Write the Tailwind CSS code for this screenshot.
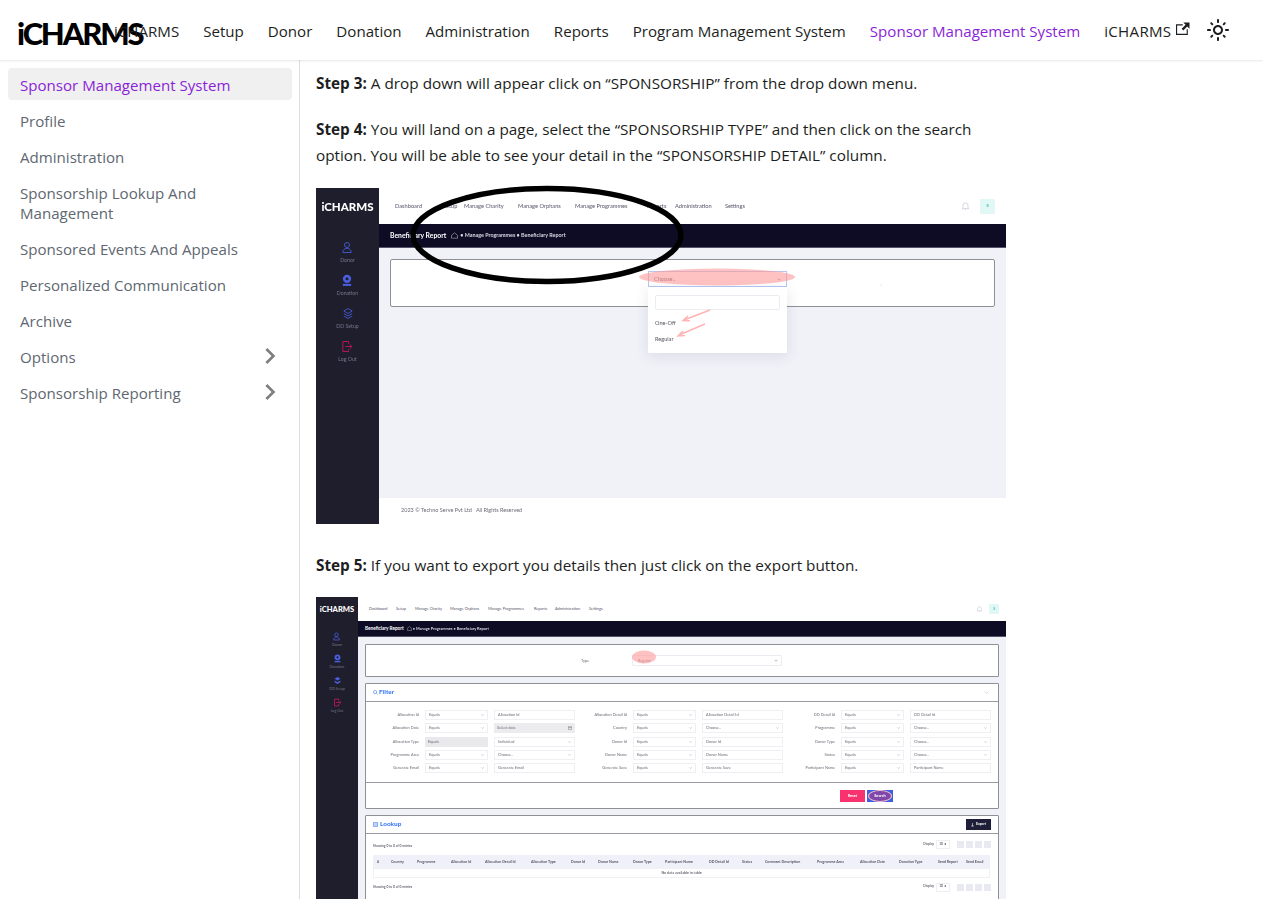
<!DOCTYPE html>
<html lang="en">
<head>
<meta charset="utf-8">
<title>iCHARMS</title>
<script src="https://cdn.jsdelivr.net/npm/@tailwindcss/browser@4"></script>
</head>
<body class="bg-white text-[#1c1e21] font-['Open_Sans',sans-serif]">
<div class="h-[899px] overflow-hidden flex flex-col">

<nav class="relative z-10 h-[60px] shrink-0 bg-white shadow-[0_1px_2px_0_rgba(0,0,0,0.1)] flex items-center pl-[17px] text-[15.1px]">
  <div class="w-[97px] whitespace-nowrap font-['Lato',sans-serif] font-black text-[31px] leading-none text-black tracking-[-2.2px] pt-[7px]">iCHARMS</div>
  <div class="flex items-center gap-[24px] whitespace-nowrap pt-[2px]">
    <a>iCHARMS</a>
    <a>Setup</a>
    <a>Donor</a>
    <a>Donation</a>
    <a>Administration</a>
    <a>Reports</a>
    <a>Program Management System</a>
    <a class="text-[#8a1fd8]">Sponsor Management System</a>
    <a class="flex items-center gap-[5px] tracking-[0.3px]">iCHARMS
      <svg width="13.5" height="13.5" viewBox="0 0 24 24" fill="currentColor" class="mb-[4px]"><path d="M21 13v10h-21v-19h12v2h-10v15h17v-8h2zm3-12h-10.988l4.035 4-6.977 7.07 2.828 2.828 6.977-7.07 4.125 4.172v-11z"/></svg>
    </a>
  </div>
  <svg width="24" height="24" viewBox="0 0 24 24" fill="currentColor" class="ml-[16px]"><path d="M12,9c1.65,0,3,1.35,3,3s-1.35,3-3,3s-3-1.35-3-3S10.35,9,12,9 M12,7c-2.76,0-5,2.24-5,5s2.24,5,5,5s5-2.24,5-5 S14.76,7,12,7L12,7z M2,13l2,0c0.55,0,1-0.45,1-1s-0.45-1-1-1l-2,0c-0.55,0-1,0.45-1,1S1.45,13,2,13z M20,13l2,0c0.55,0,1-0.45,1-1 s-0.45-1-1-1l-2,0c-0.55,0-1,0.45-1,1S19.45,13,20,13z M11,2v2c0,0.55,0.45,1,1,1s1-0.45,1-1V2c0-0.55-0.45-1-1-1S11,1.45,11,2z M11,20v2c0,0.55,0.45,1,1,1s1-0.45,1-1v-2c0-0.55-0.45-1-1-1C11.45,19,11,19.45,11,20z M5.99,4.58c-0.39-0.39-1.03-0.39-1.41,0 c-0.39,0.39-0.39,1.03,0,1.41l1.06,1.06c0.39,0.39,1.03,0.39,1.41,0s0.39-1.03,0-1.41L5.99,4.58z M18.36,16.95 c-0.39-0.39-1.03-0.39-1.41,0c-0.39,0.39-0.39,1.03,0,1.41l1.06,1.06c0.39,0.39,1.03,0.39,1.41,0c0.39-0.39,0.39-1.03,0-1.41 L18.36,16.95z M19.42,5.99c0.39-0.39,0.39-1.03,0-1.41c-0.39-0.39-1.03-0.39-1.41,0l-1.06,1.06c-0.39,0.39-0.39,1.03,0,1.41 s1.03,0.39,1.41,0L19.42,5.99z M7.05,18.36c0.39-0.39,0.39-1.03,0-1.41c-0.39-0.39-1.03-0.39-1.41,0l-1.06,1.06 c-0.39,0.39-0.39,1.03,0,1.41s1.03,0.39,1.41,0L7.05,18.36z"/></svg>
</nav>

<div class="flex flex-1 min-h-0">
  <aside class="w-[300px] shrink-0 border-r border-[#dadde1] pl-[8px] pr-[7px] pt-[8px] text-[15.1px] leading-[20px] text-[#606770] flex flex-col gap-[4px]">
    <a class="block px-[12px] pt-[7px] pb-[5px] rounded-[4px] bg-[#f0f0f0] text-[#8a1fd8]">Sponsor Management System</a>
    <a class="block px-[12px] pt-[7px] pb-[5px]">Profile</a>
    <a class="block px-[12px] pt-[7px] pb-[5px]">Administration</a>
    <a class="block px-[12px] pt-[7px] pb-[5px]">Sponsorship Lookup And Management</a>
    <a class="block px-[12px] pt-[7px] pb-[5px]">Sponsored Events And Appeals</a>
    <a class="block px-[12px] pt-[7px] pb-[5px]">Personalized Communication</a>
    <a class="block px-[12px] pt-[7px] pb-[5px]">Archive</a>
    <a class="flex items-center justify-between pl-[12px] pr-[6px] h-[32px] pt-[2px]">Options
      <svg width="32" height="32" viewBox="0 0 24 24" fill="#7f7f7f" class="rotate-90 -mt-[3px]"><path d="M7.41 15.41L12 10.83l4.59 4.58L18 14l-6-6-6 6z"/></svg>
    </a>
    <a class="flex items-center justify-between pl-[12px] pr-[6px] h-[32px] pt-[2px]">Sponsorship Reporting
      <svg width="32" height="32" viewBox="0 0 24 24" fill="#7f7f7f" class="rotate-90 -mt-[3px]"><path d="M7.41 15.41L12 10.83l4.59 4.58L18 14l-6-6-6 6z"/></svg>
    </a>
  </aside>

  <main class="flex-1 min-w-0 pl-[16px] pt-[10px] text-[15.3px] leading-[26px] overflow-hidden">
    <p class="mb-[20px]"><strong class="font-bold">Step 3:</strong> A drop down will appear click on “SPONSORSHIP” from the drop down menu.</p>
    <p class="mb-[20px] w-[690px]"><strong class="font-bold">Step 4:</strong> You will land on a page, select the “SPONSORSHIP TYPE” and then click on the search option. You will be able to see your detail in the “SPONSORSHIP DETAIL” column.</p>

    <!-- Screenshot 1 -->
    <div class="relative w-[690px] h-[336px] mb-[28px] flex bg-white font-['Lato',sans-serif] leading-none blur-[0.35px]">
      <div class="w-[63px] shrink-0 bg-[#1e1e2d] flex flex-col items-center pt-[12px] text-[#77778a] text-[5.2px]">
        <div class="h-[41px] font-black text-[11.5px] text-white leading-[14px]">iCHARMS</div>
        <div class="h-[33px] flex flex-col items-center gap-[4px]">
          <svg width="10" height="13" viewBox="0 0 12 14" fill="none" stroke="#4a5fe0" stroke-width="1"><circle cx="6" cy="4" r="3"/><path d="M1 13c0-3 2-5 5-5s5 2 5 5z"/></svg>
          <span>Donor</span>
        </div>
        <div class="h-[33px] flex flex-col items-center gap-[4px]">
          <svg width="10" height="13" viewBox="0 0 12 14" fill="#4a5fe0"><circle cx="6" cy="5" r="5"/><path d="M1 11h10v2.5H1z"/><circle cx="6" cy="5" r="1.8" fill="#1e1e2d"/></svg>
          <span>Donation</span>
        </div>
        <div class="h-[33px] flex flex-col items-center gap-[4px]">
          <svg width="10" height="13" viewBox="0 0 12 14" fill="none" stroke="#4a5fe0" stroke-width="1"><path d="M6 1l5 3-5 3-5-3z"/><path d="M1 7l5 3 5-3"/><path d="M1 10l5 3 5-3"/></svg>
          <span>DD Setup</span>
        </div>
        <div class="h-[33px] flex flex-col items-center gap-[4px]">
          <svg width="10" height="13" viewBox="0 0 12 14" fill="none" stroke="#c2185b" stroke-width="1.1"><path d="M8 4V1H1v12h7v-3"/><path d="M4 7h7.5M9.5 4.5L12 7l-2.5 2.5"/></svg>
          <span>Log Out</span>
        </div>
      </div>
      <div class="flex-1 flex flex-col min-w-0">
        <div class="h-[36px] flex items-center pl-[16px] pr-[11px] text-[5.7px] text-[#55556a] whitespace-nowrap">
          <span class="w-[48px]">Dashboard</span>
          <span class="w-[21px]">Setup</span>
          <span class="w-[54px]">Manage Charity</span>
          <span class="w-[57px]">Manage Orphans</span>
          <span class="w-[72px]">Manage Programmes</span>
          <span class="w-[28px]">Reports</span>
          <span class="w-[50px]">Administration</span>
          <span>Settings</span>
          <svg width="7" height="8" viewBox="0 0 7 8" fill="none" stroke="#b9b9cc" stroke-width="0.6" class="ml-auto mr-[11px]"><path d="M1 6V3.5a2.5 2.5 0 015 0V6l.6.7H.4zM3 7.4h1"/></svg>
          <span class="w-[15px] h-[15px] bg-[#e2f8f6] rounded-[1px] flex items-center justify-center text-[#2ab7a9] text-[4px] font-bold">S</span>
        </div>
        <div class="h-[24px] bg-[#0e0c24] flex items-center pl-[11px] text-white whitespace-nowrap border-b border-[#55556a]">
          <span class="font-bold text-[6.8px]">Beneficiary Report</span>
          <svg width="7" height="7" viewBox="0 0 7 7" fill="none" stroke="#d0d0dc" stroke-width="0.5" class="ml-[5px] mr-[2px]"><path d="M.5 3.3L3.5.8l3 2.5V6.2h-6z"/></svg>
          <span class="font-bold text-[5.4px] text-[#d8d8e2]">• Manage Programmes • Beneficiary Report</span>
        </div>
        <div class="flex-1 bg-[#f1f2f8] pt-[11px] px-[11px]">
          <div class="h-[48px] bg-white border border-[#8f8f96] rounded-[2px] pl-[257px] pt-[11px]">
            <div class="relative w-[139px] h-[16px] bg-white border border-[#b4c6f4] flex items-center justify-between px-[5px] text-[5.6px] text-[#55555f]">
              <span>Choose..</span>
              <svg width="4" height="3" viewBox="0 0 4 3" fill="none" stroke="#55556a" stroke-width="0.6"><path d="M.5.7L2 2.2 3.5.7"/></svg>
              <div class="absolute left-[-1px] top-[15px] w-[139px] h-[66px] bg-white shadow-[0_3px_14px_rgba(60,60,90,0.13)] rounded-b-[1px] px-[7px] pt-[8px] flex flex-col">
                <div class="h-[15px] border border-[#ececf2] rounded-[2px]"></div>
                <span class="mt-[10px]">One-Off</span>
                <span class="mt-[10px]">Regular</span>
              </div>
            </div>
          </div>
        </div>
        <div class="h-[26px] bg-white flex items-center pl-[22px] text-[5.5px] text-[#6b6b78]">2023 © Techno Serve Pvt Ltd &nbsp; All Rights Reserved</div>
      </div>
      <svg class="absolute inset-0 overflow-visible pointer-events-none" width="690" height="336" viewBox="0 0 690 336" fill="none">
        <ellipse cx="231" cy="47" rx="134" ry="46.5" stroke="#000" stroke-width="5.5"/>
        <ellipse cx="401" cy="89" rx="78" ry="8.5" fill="#ff9a9a" fill-opacity="0.6"/>
        <path d="M394 122l-26 10M372 128l-5 4.5 7 .2M389 136l-26 11M367 143l-5 5 7-.4" stroke="#ffb3b3" stroke-width="1.4"/>
        <circle cx="565" cy="97" r="0.6" fill="#ffb3b3"/>
      </svg>
    </div>

    <p class="mb-[19px]"><strong class="font-bold">Step 5:</strong> If you want to export you details then just click on the export button.</p>

    <!-- Screenshot 2 -->
    <div class="relative w-[690px] h-[330px] flex bg-white font-['Lato',sans-serif] leading-none blur-[0.4px]">
      <div class="w-[42px] shrink-0 bg-[#1e1e2d] flex flex-col items-center pt-[8px] text-[#77778a] text-[3.6px]">
        <div class="h-[27px] font-black text-[7.6px] text-white leading-[9px]">iCHARMS</div>
        <div class="h-[22px] flex flex-col items-center gap-[2px]">
          <svg width="7" height="9" viewBox="0 0 12 14" fill="none" stroke="#4a5fe0" stroke-width="1.3"><circle cx="6" cy="4" r="3"/><path d="M1 13c0-3 2-5 5-5s5 2 5 5z"/></svg>
          <span>Donor</span>
        </div>
        <div class="h-[22px] flex flex-col items-center gap-[2px]">
          <svg width="7" height="9" viewBox="0 0 12 14" fill="#4a5fe0"><circle cx="6" cy="5" r="5"/><path d="M1 11h10v2.5H1z"/><circle cx="6" cy="5" r="1.8" fill="#1e1e2d"/></svg>
          <span>Donation</span>
        </div>
        <div class="h-[22px] flex flex-col items-center gap-[2px]">
          <svg width="7" height="9" viewBox="0 0 12 14" fill="#4a5fe0"><path d="M6 1l5 3-5 3-5-3z"/><path d="M1 7l5 3 5-3v3l-5 3-5-3z"/></svg>
          <span>DD Setup</span>
        </div>
        <div class="h-[22px] flex flex-col items-center gap-[2px]">
          <svg width="7" height="9" viewBox="0 0 12 14" fill="none" stroke="#c2185b" stroke-width="1.5"><path d="M8 4V1H1v12h7v-3"/><path d="M4 7h7.5M9.5 4.5L12 7l-2.5 2.5"/></svg>
          <span>Log Out</span>
        </div>
      </div>
      <div class="flex-1 flex flex-col min-w-0">
        <div class="h-[24px] shrink-0 flex items-center pl-[11px] pr-[7px] text-[3.9px] text-[#55556a] whitespace-nowrap">
          <span class="w-[27px]">Dashboard</span>
          <span class="w-[19px]">Setup</span>
          <span class="w-[35px]">Manage Charity</span>
          <span class="w-[38px]">Manage Orphans</span>
          <span class="w-[46px]">Manage Programmes</span>
          <span class="w-[21px]">Reports</span>
          <span class="w-[34px]">Administration</span>
          <span>Settings</span>
          <svg width="5" height="6" viewBox="0 0 7 8" fill="none" stroke="#b9b9cc" stroke-width="0.7" class="ml-auto mr-[7px]"><path d="M1 6V3.5a2.5 2.5 0 015 0V6l.6.7H.4zM3 7.4h1"/></svg>
          <span class="w-[10px] h-[10px] bg-[#dff8f5] flex items-center justify-center text-[#2ab7a9] text-[3px] font-bold">S</span>
        </div>
        <div class="h-[16px] shrink-0 bg-[#0e0c24] flex items-center pl-[7px] text-white whitespace-nowrap border-b border-[#55556a]">
          <span class="font-bold text-[4.7px]">Beneficiary Report</span>
          <svg width="5" height="5" viewBox="0 0 7 7" fill="none" stroke="#d0d0dc" stroke-width="0.6" class="ml-[3px] mr-[1px]"><path d="M.5 3.3L3.5.8l3 2.5V6.2h-6z"/></svg>
          <span class="font-bold text-[3.9px] text-[#d8d8e2]">• Manage Programmes • Beneficiary Report</span>
        </div>
        <div class="flex-1 bg-[#f1f2f8] px-[7px] pt-[7px] text-[3.9px] text-[#6b6b78]">

          <div class="h-[33px] bg-white border border-[#8f8f96] rounded-[1px] flex items-center">
            <span class="ml-[215px] w-[51px]">Type</span>
            <div class="w-[150px] h-[11px] border border-[#ececf2] rounded-[1px] flex items-center justify-between pl-[5px] pr-[3px]">
              <span>Regular</span><svg width="4" height="3" viewBox="0 0 4 3" fill="none" stroke="#777" stroke-width="0.5"><path d="M.5.7L2 2.2 3.5.7"/></svg>
            </div>
          </div>

          <div class="mt-[6px] bg-white border border-[#8f8f96] rounded-[1px] flex flex-col">
            <div class="h-[18px] border-b border-[#9a9aa2] flex items-center pl-[7px] pr-[9px] text-[#3b7bf5] font-black text-[6.4px] gap-[1px]">
              <svg width="5" height="5" viewBox="0 0 6 6" fill="none" stroke="#3b7bf5" stroke-width="0.7"><circle cx="2.5" cy="2.5" r="1.9"/><path d="M4 4l1.6 1.6"/></svg>
              <span>Filter</span>
              <svg width="5" height="3" viewBox="0 0 5 3" fill="none" stroke="#b5b5c5" stroke-width="0.5" class="ml-auto"><path d="M.5.5l2 2 2-2"/></svg>
            </div>
            <div class="h-[80px] pl-[4px] pt-[8px] grid grid-cols-[205px_205px_205px] gap-x-[3px] auto-rows-[10px] gap-y-[3.3px] items-stretch">
              <div class="grid grid-cols-[49px_63px_81px] gap-x-[6px]"><span class="self-center text-right">Allocation Id</span><span class="border border-[#eeeef3] flex items-center justify-between px-[3px]">Equals<svg width="3" height="2" viewBox="0 0 4 3" fill="none" stroke="#777" stroke-width=".6"><path d="M.5.7L2 2.2 3.5.7"/></svg></span><span class="border border-[#eeeef3] flex items-center px-[3px]">Allocation Id</span></div>
              <div class="grid grid-cols-[49px_63px_81px] gap-x-[6px]"><span class="self-center whitespace-nowrap flex justify-end">Allocation Detail Id</span><span class="border border-[#eeeef3] flex items-center justify-between px-[3px]">Equals<svg width="3" height="2" viewBox="0 0 4 3" fill="none" stroke="#777" stroke-width=".6"><path d="M.5.7L2 2.2 3.5.7"/></svg></span><span class="border border-[#eeeef3] flex items-center px-[3px]">Allocation Detail Id</span></div>
              <div class="grid grid-cols-[49px_63px_81px] gap-x-[6px]"><span class="self-center text-right">DD Detail Id</span><span class="border border-[#eeeef3] flex items-center justify-between px-[3px]">Equals<svg width="3" height="2" viewBox="0 0 4 3" fill="none" stroke="#777" stroke-width=".6"><path d="M.5.7L2 2.2 3.5.7"/></svg></span><span class="border border-[#eeeef3] flex items-center px-[3px]">DD Detail Id</span></div>

              <div class="grid grid-cols-[49px_63px_81px] gap-x-[6px]"><span class="self-center text-right">Allocation Date</span><span class="border border-[#eeeef3] flex items-center justify-between px-[3px]">Equals<svg width="3" height="2" viewBox="0 0 4 3" fill="none" stroke="#777" stroke-width=".6"><path d="M.5.7L2 2.2 3.5.7"/></svg></span><span class="bg-[#ececef] flex items-center justify-between px-[3px]">Select date<svg width="4" height="4" viewBox="0 0 4 4" fill="none" stroke="#777" stroke-width=".5"><path d="M.3.7h3.4v3H.3zM.3 1.6h3.4"/></svg></span></div>
              <div class="grid grid-cols-[49px_63px_81px] gap-x-[6px]"><span class="self-center text-right">Country</span><span class="border border-[#eeeef3] flex items-center justify-between px-[3px]">Equals<svg width="3" height="2" viewBox="0 0 4 3" fill="none" stroke="#777" stroke-width=".6"><path d="M.5.7L2 2.2 3.5.7"/></svg></span><span class="border border-[#eeeef3] flex items-center justify-between px-[3px]">Choose..<svg width="3" height="2" viewBox="0 0 4 3" fill="none" stroke="#777" stroke-width=".6"><path d="M.5.7L2 2.2 3.5.7"/></svg></span></div>
              <div class="grid grid-cols-[49px_63px_81px] gap-x-[6px]"><span class="self-center text-right">Programme</span><span class="border border-[#eeeef3] flex items-center justify-between px-[3px]">Equals<svg width="3" height="2" viewBox="0 0 4 3" fill="none" stroke="#777" stroke-width=".6"><path d="M.5.7L2 2.2 3.5.7"/></svg></span><span class="border border-[#eeeef3] flex items-center justify-between px-[3px]">Choose..<svg width="3" height="2" viewBox="0 0 4 3" fill="none" stroke="#777" stroke-width=".6"><path d="M.5.7L2 2.2 3.5.7"/></svg></span></div>

              <div class="grid grid-cols-[49px_63px_81px] gap-x-[6px]"><span class="self-center text-right">Allocation Type</span><span class="bg-[#e9e9ec] flex items-center px-[3px]">Equals</span><span class="border border-[#eeeef3] flex items-center justify-between px-[3px]">Individual<svg width="3" height="2" viewBox="0 0 4 3" fill="none" stroke="#777" stroke-width=".6"><path d="M.5.7L2 2.2 3.5.7"/></svg></span></div>
              <div class="grid grid-cols-[49px_63px_81px] gap-x-[6px]"><span class="self-center text-right">Donor Id</span><span class="border border-[#eeeef3] flex items-center justify-between px-[3px]">Equals<svg width="3" height="2" viewBox="0 0 4 3" fill="none" stroke="#777" stroke-width=".6"><path d="M.5.7L2 2.2 3.5.7"/></svg></span><span class="border border-[#eeeef3] flex items-center px-[3px]">Donor Id</span></div>
              <div class="grid grid-cols-[49px_63px_81px] gap-x-[6px]"><span class="self-center text-right">Donor Type</span><span class="border border-[#eeeef3] flex items-center justify-between px-[3px]">Equals<svg width="3" height="2" viewBox="0 0 4 3" fill="none" stroke="#777" stroke-width=".6"><path d="M.5.7L2 2.2 3.5.7"/></svg></span><span class="border border-[#eeeef3] flex items-center justify-between px-[3px]">Choose..<svg width="3" height="2" viewBox="0 0 4 3" fill="none" stroke="#777" stroke-width=".6"><path d="M.5.7L2 2.2 3.5.7"/></svg></span></div>

              <div class="grid grid-cols-[49px_63px_81px] gap-x-[6px]"><span class="self-center text-right whitespace-nowrap">Programme Area</span><span class="border border-[#eeeef3] flex items-center justify-between px-[3px]">Equals<svg width="3" height="2" viewBox="0 0 4 3" fill="none" stroke="#777" stroke-width=".6"><path d="M.5.7L2 2.2 3.5.7"/></svg></span><span class="border border-[#eeeef3] flex items-center justify-between px-[3px]">Choose..<svg width="3" height="2" viewBox="0 0 4 3" fill="none" stroke="#777" stroke-width=".6"><path d="M.5.7L2 2.2 3.5.7"/></svg></span></div>
              <div class="grid grid-cols-[49px_63px_81px] gap-x-[6px]"><span class="self-center text-right">Donor Name</span><span class="border border-[#eeeef3] flex items-center justify-between px-[3px]">Equals<svg width="3" height="2" viewBox="0 0 4 3" fill="none" stroke="#777" stroke-width=".6"><path d="M.5.7L2 2.2 3.5.7"/></svg></span><span class="border border-[#eeeef3] flex items-center px-[3px]">Donor Name</span></div>
              <div class="grid grid-cols-[49px_63px_81px] gap-x-[6px]"><span class="self-center text-right">Status</span><span class="border border-[#eeeef3] flex items-center justify-between px-[3px]">Equals<svg width="3" height="2" viewBox="0 0 4 3" fill="none" stroke="#777" stroke-width=".6"><path d="M.5.7L2 2.2 3.5.7"/></svg></span><span class="border border-[#eeeef3] flex items-center justify-between px-[3px]">Choose..<svg width="3" height="2" viewBox="0 0 4 3" fill="none" stroke="#777" stroke-width=".6"><path d="M.5.7L2 2.2 3.5.7"/></svg></span></div>

              <div class="grid grid-cols-[49px_63px_81px] gap-x-[6px]"><span class="self-center text-right">Generate Email</span><span class="border border-[#eeeef3] flex items-center justify-between px-[3px]">Equals<svg width="3" height="2" viewBox="0 0 4 3" fill="none" stroke="#777" stroke-width=".6"><path d="M.5.7L2 2.2 3.5.7"/></svg></span><span class="border border-[#eeeef3] flex items-center px-[3px]">Generate Email</span></div>
              <div class="grid grid-cols-[49px_63px_81px] gap-x-[6px]"><span class="self-center text-right">Generate Save</span><span class="border border-[#eeeef3] flex items-center justify-between px-[3px]">Equals<svg width="3" height="2" viewBox="0 0 4 3" fill="none" stroke="#777" stroke-width=".6"><path d="M.5.7L2 2.2 3.5.7"/></svg></span><span class="border border-[#eeeef3] flex items-center px-[3px]">Generate Save</span></div>
              <div class="grid grid-cols-[49px_63px_81px] gap-x-[6px]"><span class="self-center whitespace-nowrap flex justify-end">Participant Name</span><span class="border border-[#eeeef3] flex items-center justify-between px-[3px]">Equals<svg width="3" height="2" viewBox="0 0 4 3" fill="none" stroke="#777" stroke-width=".6"><path d="M.5.7L2 2.2 3.5.7"/></svg></span><span class="border border-[#eeeef3] flex items-center px-[3px]">Participant Name</span></div>
            </div>
            <div class="h-[26px] border-t border-[#9a9aa2] flex items-center pl-[474px] gap-[2px] text-[3.9px] font-bold text-white">
              <span class="w-[25px] h-[12px] bg-[#f8326e] flex items-center justify-center">Reset</span>
              <span class="w-[26px] h-[12px] bg-[#3d5ee0] flex items-center justify-center"><span class="w-[24px] h-[12px] rounded-[50%] bg-[#8047a8] border border-[#f4c0c8] flex items-center justify-center">Search</span></span>
            </div>
          </div>

          <div class="mt-[6px] bg-white border border-[#8f8f96] rounded-[1px] h-[120px]">
            <div class="h-[18px] border-b border-[#9a9aa2] flex items-center pl-[7px] pr-[7px] text-[#3b7bf5] font-black text-[6.4px] gap-[2px]">
              <span class="w-[5px] h-[5px] bg-[#bcd2f7] border border-[#8fb0ee]"></span>
              <span>Lookup</span>
              <span class="ml-auto w-[25px] h-[11px] bg-[#1e1e38] text-white text-[3.4px] font-bold flex items-center justify-center gap-[2px]">
                <svg width="3" height="4" viewBox="0 0 3 4" fill="none" stroke="#fff" stroke-width="0.5"><path d="M1.5 0v3M.5 2l1 1 1-1M.2 3.8h2.6"/></svg>Export
              </span>
            </div>
            <div class="h-[21px] flex items-center pl-[7px] pr-[7px] text-[3.3px] font-bold">
              <span class="pt-[5px]">Showing 0 to 0 of 0 entries</span>
              <span class="ml-auto mr-[2px]">Display</span>
              <span class="w-[14px] h-[9px] border border-[#eeeef3] flex items-center justify-center mr-[7px]">10 ⬍</span>
              <span class="flex gap-[2px]">
                <span class="w-[7px] h-[7px] bg-[#e9e9f1]"></span><span class="w-[7px] h-[7px] bg-[#e9e9f1]"></span><span class="w-[7px] h-[7px] bg-[#e9e9f1]"></span><span class="w-[7px] h-[7px] bg-[#e9e9f1]"></span>
              </span>
            </div>
            <div class="ml-[7px] w-[617px] h-[13px] bg-[#f0f1f8] grid grid-cols-[14px_26px_34px_34px_46px_40px_27px_35px_32px_44px_33px_23px_52px_43px_39px_39px_28px_28px] items-center text-[3.6px] font-bold text-[#55556a] whitespace-nowrap">
              <span class="pl-[4px]">#</span><span class="pl-[4px]">Country</span><span class="pl-[4px]">Programme</span><span class="pl-[4px]">Allocation Id</span><span class="pl-[4px]">Allocation Detail Id</span><span class="pl-[4px]">Allocation Type</span><span class="pl-[4px]">Donor Id</span><span class="pl-[4px]">Donor Name</span><span class="pl-[4px]">Donor Type</span><span class="pl-[4px]">Participant Name</span><span class="pl-[4px]">DD Detail Id</span><span class="pl-[4px]">Status</span><span class="pl-[4px]">Comment Description</span><span class="pl-[4px]">Programme Area</span><span class="pl-[4px]">Allocation Date</span><span class="pl-[4px]">Donation Type</span><span class="pl-[4px]">Send Report</span><span class="pl-[4px]">Send Email</span>
            </div>
            <div class="ml-[7px] w-[617px] h-[10px] border border-[#f0f0f5] flex items-center justify-center text-[3.6px] font-bold">No data available in table</div>
            <div class="h-[18px] flex items-center pl-[7px] pr-[7px] text-[3.3px] font-bold">
              <span class="pt-[1px]">Showing 0 to 0 of 0 entries</span>
              <span class="ml-auto mr-[2px]">Display</span>
              <span class="w-[14px] h-[9px] border border-[#eeeef3] flex items-center justify-center mr-[7px]">10 ⬍</span>
              <span class="flex gap-[2px]">
                <span class="w-[7px] h-[7px] bg-[#e9e9f1]"></span><span class="w-[7px] h-[7px] bg-[#e9e9f1]"></span><span class="w-[7px] h-[7px] bg-[#e9e9f1]"></span><span class="w-[7px] h-[7px] bg-[#e9e9f1]"></span>
              </span>
            </div>
          </div>
        </div>
      </div>
      <svg class="absolute inset-0 pointer-events-none" width="690" height="330" viewBox="0 0 690 330" fill="none">
        <ellipse cx="328" cy="60" rx="12" ry="6.5" fill="#ff9a9a" fill-opacity="0.6"/>
      </svg>
    </div>
  </main>
</div>
</div>
</body>
</html>
